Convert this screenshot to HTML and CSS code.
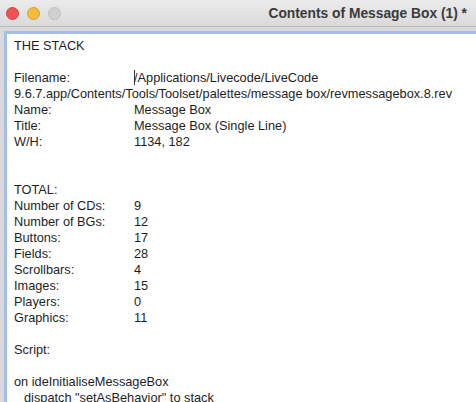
FILE: index.html
```html
<!DOCTYPE html>
<html>
<head>
<meta charset="utf-8">
<link rel="stylesheet" href="styles.css">
</head>
<body>
<div class="window">
  <div class="titlebar">
    <div class="lights">
      <span class="light red"></span>
      <span class="light yellow"></span>
      <span class="light gray"></span>
    </div>
    <div class="title">Contents of Message Box (1) *</div>
  </div>
  <div class="content">
    <div class="field">
      <div class="line">THE STACK</div>
      <div class="line">&nbsp;</div>
      <div class="line"><span class="label">Filename:</span><span class="caret"></span>/Applications/Livecode/LiveCode</div>
      <div class="line">9.6.7.app/Contents/Tools/Toolset/palettes/message box/revmessagebox.8.rev</div>
      <div class="line"><span class="label">Name:</span>Message Box</div>
      <div class="line"><span class="label">Title:</span>Message Box (Single Line)</div>
      <div class="line"><span class="label">W/H:</span>1134, 182</div>
      <div class="line">&nbsp;</div>
      <div class="line">&nbsp;</div>
      <div class="line">TOTAL:</div>
      <div class="line"><span class="label">Number of CDs:</span>9</div>
      <div class="line"><span class="label">Number of BGs:</span>12</div>
      <div class="line"><span class="label">Buttons:</span>17</div>
      <div class="line"><span class="label">Fields:</span>28</div>
      <div class="line"><span class="label">Scrollbars:</span>4</div>
      <div class="line"><span class="label">Images:</span>15</div>
      <div class="line"><span class="label">Players:</span>0</div>
      <div class="line"><span class="label">Graphics:</span>11</div>
      <div class="line">&nbsp;</div>
      <div class="line">Script:</div>
      <div class="line">&nbsp;</div>
      <div class="line">on ideInitialiseMessageBox</div>
      <div class="line indent">dispatch "setAsBehavior" to stack</div>
      <div class="line">&nbsp;</div>
    </div>
  </div>
</div>
</body>
</html>
```
FILE: styles.css
```css
html, body {
  margin: 0;
  padding: 0;
  background: #d9d9d9;
  overflow: hidden;
}
.window {
  width: 476px;
  height: 402px;
  overflow: hidden;
  font-family: "Liberation Sans", Arial, sans-serif;
}
.titlebar {
  height: 26px;
  border-bottom: 1px solid #b9b9b9;
  background: linear-gradient(#ebebeb, #dadada);
  display: flex;
  align-items: center;
  justify-content: space-between;
  padding: 0 9px 0 6px;
}
.lights {
  display: flex;
  gap: 8px;
}
.light {
  width: 11px;
  height: 11px;
  border-radius: 50%;
  display: block;
}
.red { background: #ee5254; border: 0.5px solid #d3403f; }
.yellow { background: #f2bd3c; border: 0.5px solid #d5a12e; }
.gray { background: #d0d0d0; border: 0.5px solid #bdbdbd; }
.title {
  font-weight: bold;
  font-size: 13.8px;
  color: #3a3a3a;
}
.content {
  padding: 4px 0 0 4px;
  background: #d9d9d9;
}
.field {
  background: #fff;
  border-top: 3px solid #a4bde9;
  border-left: 3px solid #a4bde9;
  padding: 4px 0 0 7px;
  font-size: 12.75px;
  line-height: 16px;
  color: #1e1e1e;
  height: 400px;
}
.line {
  white-space: nowrap;
}
.label {
  display: inline-block;
  width: 120px;
}
.caret {
  display: inline-block;
  width: 1px;
  height: 15px;
  background: #333;
  vertical-align: -3px;
  margin-right: -1px;
}
.indent {
  padding-left: 10px;
}
```
